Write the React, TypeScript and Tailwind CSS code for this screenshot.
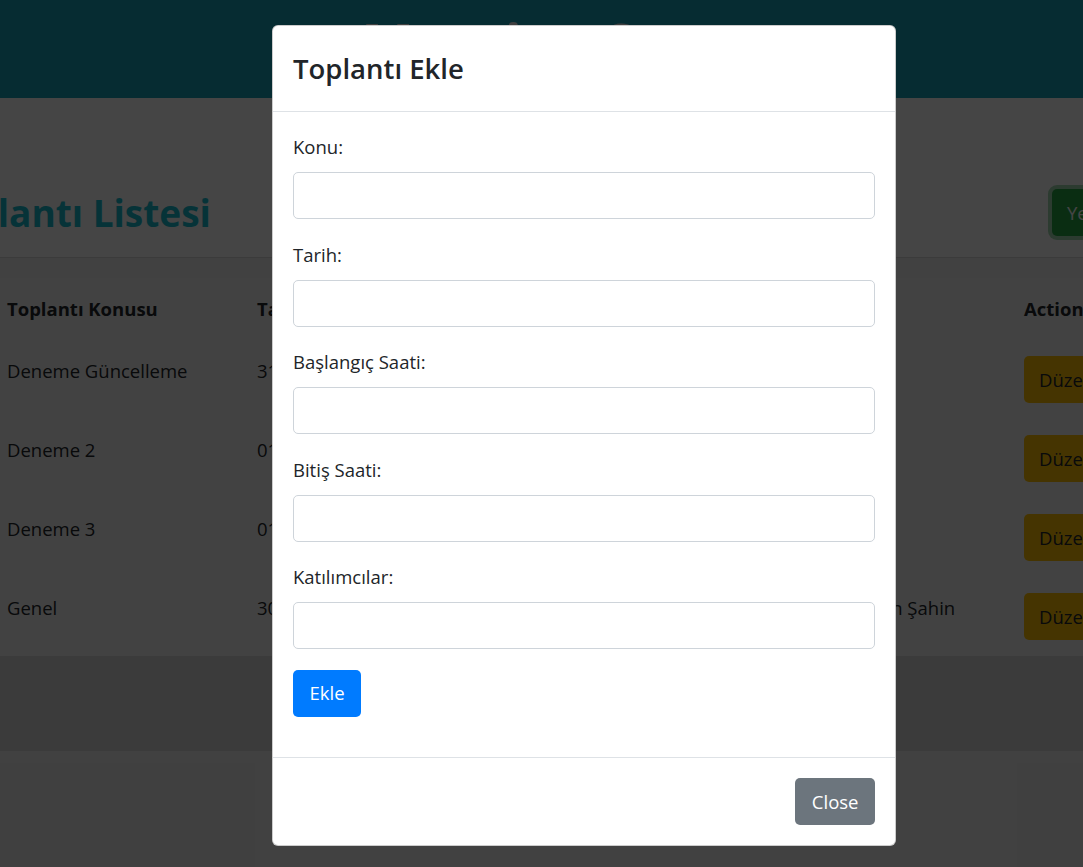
const meetings = [
  { subject: "Deneme Güncelleme", date: "31.05.2024", start: "10:00", end: "11:00", people: "Ahmet Yılmaz" },
  { subject: "Deneme 2", date: "01.06.2024", start: "14:00", end: "15:00", people: "Mehmet Demir" },
  { subject: "Deneme 3", date: "01.06.2024", start: "09:30", end: "10:30", people: "Ayşe Kaya" },
  { subject: "Genel", date: "30.05.2024", start: "13:00", end: "14:00", people: "Ali Yılmaz, Hasan Şahin" },
];

const fields = ["Konu:", "Tarih:", "Başlangıç Saati:", "Bitiş Saati:", "Katılımcılar:"];

const cols = "grid grid-cols-[250px_160px_190px_150px_267px_200px]";

function MeetingList() {
  return (
    <div>
      <header className="h-[98px] bg-[#17a2b8] pt-[14px] text-center">
        <h1 className="ml-[86px] text-[56px] font-bold leading-none text-[#e8e8e8]">Meeting System</h1>
      </header>

      <div className="border-b border-[#d8d8d8] bg-white pt-[91px] pb-[21px]">
        <div className="grid grid-cols-[1052px_auto] items-center">
          <h2 className="-ml-[70px] text-[37px] font-bold leading-[47px] text-[#19bccf]">Toplantı Listesi</h2>
          <button className="h-[47px] whitespace-nowrap rounded-[5px] bg-[#28a745] px-[15px] text-white shadow-[0_0_0_4px_rgba(72,180,97,0.5)]">
            Yeni Toplantı Ekle
          </button>
        </div>
      </div>

      <div className="mt-[20px] bg-[#f4f4f4]">
        <div className={`${cols} font-bold`}>
          <div className="py-[16px] pl-[7px]">Toplantı Konusu</div>
          <div className="py-[16px] pl-[7px]">Tarih</div>
          <div className="py-[16px] pl-[7px]">Başlangıç Saati</div>
          <div className="py-[16px] pl-[7px]">Bitiş Saati</div>
          <div className="py-[16px] pl-[7px]">Katılımcılar</div>
          <div className="py-[16px] pl-[7px]">Actions</div>
        </div>
        {meetings.map((m) => (
          <div key={m.subject} className={cols}>
            <div className="py-[16px] pl-[7px]">{m.subject}</div>
            <div className="py-[16px] pl-[7px]">{m.date}</div>
            <div className="py-[16px] pl-[7px]">{m.start}</div>
            <div className="py-[16px] pl-[7px]">{m.end}</div>
            <div className="whitespace-nowrap py-[16px] pl-[7px]">{m.people}</div>
            <div className="flex gap-2 py-[16px] pl-[7px]">
              <button className="h-[47px] rounded-[5px] bg-[#ffc107] px-[15px]">Düzenle</button>
              <button className="h-[47px] rounded-[5px] bg-[#dc3545] px-[15px] text-white">Sil</button>
            </div>
          </div>
        ))}
      </div>

      <div className="h-[95px] bg-[#d8d8d8]" />
    </div>
  );
}

function AddMeetingModal() {
  return (
    <div className="mt-[25px] h-fit w-[624px] rounded-[6px] border border-black/20 bg-white">
      <div className="border-b border-[#dee2e6] p-[20px]">
        <h4 className="text-[27.5px] font-semibold leading-[45px]">Toplantı Ekle</h4>
      </div>
      <div className="p-[20px]">
        <form className="flex flex-col gap-[20.5px]">
          {fields.map((label) => (
            <div key={label}>
              <label className="mb-[10px] block">{label}</label>
              <input
                type="text"
                className="block h-[47px] w-full rounded-[5px] border border-[#ced4da] px-[15px] outline-none"
              />
            </div>
          ))}
          <div className="mb-[20.5px]">
            <button type="button" className="h-[47px] rounded-[5px] bg-[#007bff] px-[16.5px] text-white">
              Ekle
            </button>
          </div>
        </form>
      </div>
      <div className="flex justify-end border-t border-[#dee2e6] p-[15px]">
        <button className="m-[5px] h-[47px] rounded-[5px] bg-[#6c757d] px-[16.5px] text-white">Close</button>
      </div>
    </div>
  );
}

export default function App() {
  return (
    <div className="relative h-[867px] w-full overflow-hidden bg-[#eeeeee] font-['Open_Sans',sans-serif] text-[18.5px] leading-[30px] text-[#212529]">
      <MeetingList />
      <div className="absolute inset-0 bg-black/[0.73]" />
      <div className="absolute inset-y-0 left-0 flex w-[1168px] justify-center">
        <AddMeetingModal />
      </div>
    </div>
  );
}
